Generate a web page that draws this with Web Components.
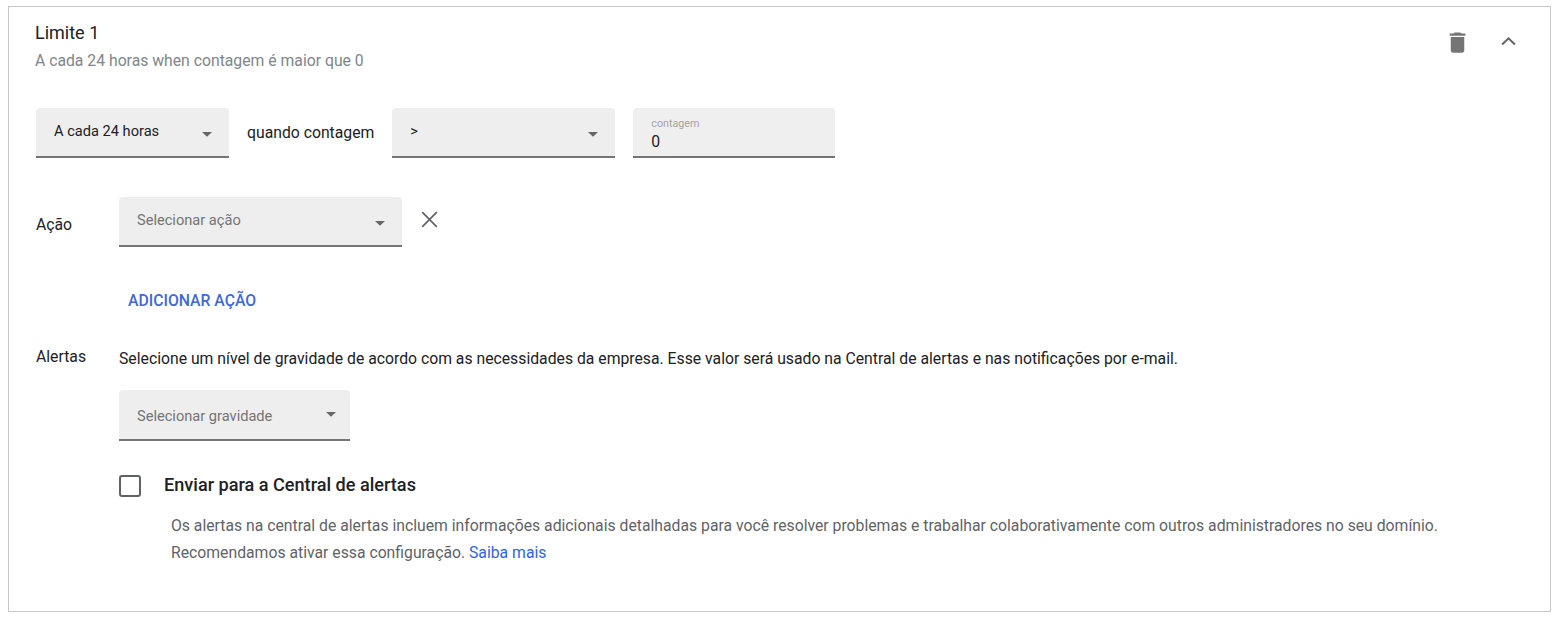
<!DOCTYPE html>
<html lang="pt"><head><meta charset="utf-8"><title>Limite</title>
<style>
html,body{margin:0;background:#fff;font-family:Roboto,sans-serif;color:#202124}
body{padding:6px 6px 6px 8px}
</style></head><body>
<template id="sel-t"><style>
:host{display:flex;box-sizing:border-box;height:var(--h,50px);background:#eee;border-bottom:2px solid #757575;border-radius:4px 4px 0 0;padding:0 var(--pr,16px) 0 18px;justify-content:space-between;font-size:14.625px;color:var(--c,#202124);flex:none}
.t{margin-top:var(--ty,14px);line-height:18px;white-space:nowrap}
svg{margin-top:var(--ay,24px);width:12px;height:6px;flex:none}
</style><span class="t"><slot></slot></span><svg viewBox="0 0 12 6"><path d="M1 0h10L6 4.800z" fill="#666"/></svg></template>

<template id="inp-t"><style>
:host{display:block;box-sizing:border-box;height:50px;background:#efefef;border-bottom:2px solid #757575;border-radius:4px 4px 0 0;padding:9px 18px 0;flex:none}
.l{font-size:10.700px;line-height:13px;color:#a3a3a3}
.v{font-size:15.750px;line-height:20px;margin-top:2px;color:#202124}
</style><div class="l"><slot name="label"></slot></div><div class="v"><slot></slot></div></template>

<template id="card-t"><style>
:host{display:block;box-sizing:border-box;height:606px;border:1px solid #c8c8c8;position:relative;font-family:Roboto,sans-serif}
.wrap{display:flex;flex-direction:column;padding:15px 0 0 27px}
.hd{display:flex;justify-content:space-between;height:72px}
.ht{margin-left:-1px}
.title{font-size:18px;line-height:22px;color:#202124}
.sub{font-size:15.750px;line-height:20px;color:#80868b;margin-top:7px}
.icons{display:flex;gap:24.500px;margin:6px 28px 0 0;align-items:flex-start}
.icons svg:first-child{margin-top:1px}
.row{display:flex;align-items:flex-start}
.r1{margin-top:14px}
.q{font-size:15.750px;line-height:20px;margin:15px 18px 0 18px;white-space:nowrap}
.r2{margin-top:39px}
.lab{width:83px;flex:none;font-size:15.750px;line-height:20px;color:#202124}
.x{margin:9px 0 0 14px;width:27px;height:27px}
.add{margin:44px 0 0 92px;font-size:15.750px;font-weight:500;line-height:20px;color:#3f68dc}
.r3{margin-top:36px}
.desc{font-size:15.750px;line-height:20px;color:#202124;white-space:nowrap;margin-top:2px}
.col{display:flex;flex-direction:column;align-items:flex-start}
.s3{margin-top:21px}
.cb{display:flex;align-items:flex-start;margin-top:34px}
.box{box-sizing:border-box;width:22px;height:22px;border:2px solid #5f6368;border-radius:3px;flex:none}
.cl{margin-left:23px;font-size:18.100px;font-weight:500;line-height:20px;margin-top:0;color:#202124;white-space:nowrap}
.help{margin:15px 0 0 135px;font-size:15.750px;line-height:27px;color:#5f6368;white-space:nowrap}
a{color:#2f62e8;text-decoration:none}
</style>
<div class="wrap">
<div class="hd"><div class="ht"><div class="title">Limite 1</div><div class="sub">A cada 24 horas when contagem é maior que 0</div></div>
<div class="icons">
<svg width="27" height="27" viewBox="0 0 24 24"><path fill="#757575" d="M6 19c0 1.100.900 2 2 2h8c1.100 0 2-.900 2-2V7H6v12zM19 4h-3.500l-1-1h-5l-1 1H5v2h14V4z"/></svg>
<svg width="27" height="27" viewBox="0 0 24 24"><path fill="none" stroke="#5f6368" stroke-width="1.700" d="M6.300 14.700L12 9.100l5.700 5.600"/></svg>
</div></div>

<div class="row r1">
<x-select style="width:193px">A cada 24 horas</x-select>
<div class="q">quando contagem</div>
<x-select style="width:223px">&gt;</x-select>
<x-input style="width:202px;margin-left:18px"><span slot="label">contagem</span>0</x-input>
</div>

<div class="row r2">
<div class="lab" style="margin-top:18px">Ação</div>
<x-select style="width:283px;--c:#757575">Selecionar ação</x-select>
<svg class="x" viewBox="0 0 24 24"><path fill="none" stroke="#5f6368" stroke-width="1.500" d="M5.500 5.500l13 13M18.500 5.500l-13 13"/></svg>
</div>

<div class="add">ADICIONAR AÇÃO</div>

<div class="row r3">
<div class="lab">Alertas</div>
<div class="col">
<div class="desc">Selecione um nível de gravidade de acordo com as necessidades da empresa. Esse valor será usado na Central de alertas e nas notificações por e-mail.</div>
<x-select class="s3" style="width:231px;--c:#757575;--ty:17px;--ay:22px;--h:51px;--pr:13px">Selecionar gravidade</x-select>
<div class="cb"><div class="box"></div><div class="cl">Enviar para a Central de alertas</div></div>
</div></div>
<div class="help">Os alertas na central de alertas incluem informações adicionais detalhadas para você resolver problemas e trabalhar colaborativamente com outros administradores no seu domínio.<br>Recomendamos ativar essa configuração. <a href="#">Saiba mais</a></div>
</div></template>

<limit-card></limit-card>
<script>
function reg(name,id){customElements.define(name,class extends HTMLElement{constructor(){super();this.attachShadow({mode:'open'}).appendChild(document.getElementById(id).content.cloneNode(true))}})}
reg('x-select','sel-t');reg('x-input','inp-t');reg('limit-card','card-t');
</script>
</body></html>
